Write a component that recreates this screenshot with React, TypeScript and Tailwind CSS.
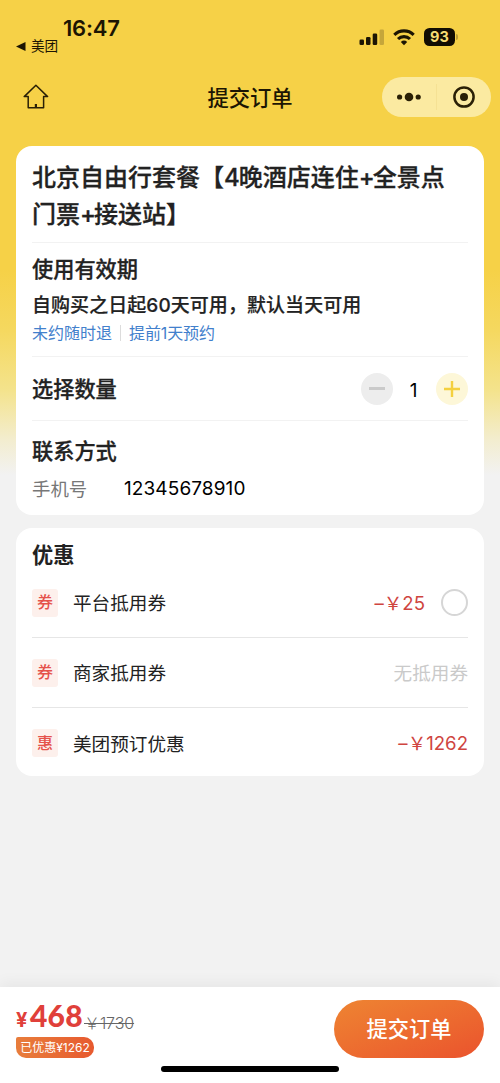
import type { ReactNode } from "react";

function StatusBar() {
  return (
    <div className="flex h-[69px] justify-between">
      <div className="pl-4 pt-[16px]">
        <div className="pl-[47px] text-[22px] font-semibold leading-6 tracking-[-0.2px] text-[#1c1503]">16:47</div>
        <div className="flex h-[13px] items-center gap-[5px] text-[13.6px] leading-[13px] text-[#1c1503]">
          <svg width="10" height="9" viewBox="0 0 10 9"><path d="M9.5 0v9L0 4.5z" fill="#1c1503" /></svg>
          <span>美团</span>
        </div>
      </div>
      <div className="flex h-[18px] items-center pr-[42px] mt-[28px]">
        <svg width="26" height="17" viewBox="0 0 26 17">
          <rect x="0.5" y="10.5" width="4.5" height="5.5" rx="1.3" fill="#1c1503" />
          <rect x="7" y="8" width="4.5" height="8" rx="1.3" fill="#1c1503" />
          <rect x="13.7" y="4.5" width="4.5" height="11.5" rx="1.3" fill="#1c1503" />
          <rect x="20.5" y="0.5" width="4.5" height="15.5" rx="1.3" fill="#c5a63a" />
        </svg>
        <svg className="ml-[8px]" width="22" height="17" viewBox="0 0 22 17" fill="none" stroke="#1c1503" strokeWidth="3.1">
          <path d="M1.3 5.8a14 14 0 0 1 19.4 0" />
          <path d="M5 10a8.7 8.7 0 0 1 12 0" />
          <path d="M11 16.2 7.8 13a4.7 4.7 0 0 1 6.4 0z" fill="#1c1503" stroke="none" />
        </svg>
        <div className="ml-[9px] flex h-[18px] w-[31px] items-center justify-center rounded-[5.5px] bg-[#120d02] text-[14.5px] font-bold leading-[18px] text-[#f7dc73]">93</div>
        <div className="ml-[1px] h-[6px] w-[2px] rounded-r-full bg-[#bd9f38]" />
      </div>
    </div>
  );
}

function NavBar() {
  return (
    <div className="grid h-[56px] grid-cols-[1fr_auto_1fr] items-center text-[#1c1503]">
      <div className="pl-[23px]">
        <svg width="26" height="26" viewBox="0 0 26 26" fill="none" stroke="#2a2006" strokeWidth="1.5" strokeLinejoin="round" strokeLinecap="round">
          <path d="M12.9 1.3 1.2 12.6h4v11.2h15.4V12.6h4z" />
          <path d="M12.9 20v3.8" strokeWidth="2.2" strokeLinecap="butt" />
        </svg>
      </div>
      <div className="pt-[2px] text-[21.3px] font-medium leading-7">提交订单</div>
      <div className="flex justify-end pr-[9px]">
        <div className="flex h-[40px] w-[109px] items-center rounded-full bg-[#fbeaa1]">
          <div className="flex flex-1 justify-center">
            <svg width="26" height="10" viewBox="0 0 26 10" fill="#2a2006">
              <circle cx="3.6" cy="5" r="2.6" /><circle cx="13" cy="5" r="4.3" /><circle cx="22.2" cy="5" r="2.6" />
            </svg>
          </div>
          <div className="h-[26px] w-px bg-[#f5e194]" />
          <div className="flex flex-1 justify-center">
            <svg width="22" height="22" viewBox="0 0 22 22">
              <circle cx="11" cy="11" r="9.6" fill="none" stroke="#2a2006" strokeWidth="2.5" /><circle cx="11" cy="11" r="4" fill="#2a2006" />
            </svg>
          </div>
        </div>
      </div>
    </div>
  );
}

function SectionTitle({ children }: { children: ReactNode }) {
  return <h2 className="text-[21.2px] font-medium leading-[30px] [-webkit-text-stroke:0.3px_#222]">{children}</h2>;
}

function OrderCard() {
  return (
    <section className="mx-4 mt-[21px] h-[369px] rounded-[16px] bg-white px-4 pt-[13px] text-[#222]">
      <h1 className="h-[83px] whitespace-nowrap text-[24px] font-medium leading-[37px] [-webkit-text-stroke:0.3px_#222]">
        北京自由行套餐【<span className="tracking-[-1px]">4</span>晚酒店连住<span className="tracking-[-2px]">+</span>全景点
        <br />
        门票<span className="tracking-[-2px]">+</span>接送站】
      </h1>
      <div className="h-[114px] border-t border-[#f2f2f2] pt-[11px]">
        <SectionTitle>使用有效期</SectionTitle>
        <p className="mt-[8px] text-[19px] font-medium leading-[28px] tracking-[0.06px] [-webkit-text-stroke:0.2px_#222]">自购买之日起60天可用，默认当天可用</p>
        <p className="-mt-[1px] flex items-center text-[16px] leading-[28px] text-[#4280cc]">
          <span>未约随时退</span>
          <span className="mx-[8px] h-4 w-px bg-[#dcdcdc]" />
          <span className="tracking-[-0.1px]">提前1天预约</span>
        </p>
      </div>
      <div className="flex h-[64px] items-center justify-between border-t border-[#f2f2f2]">
        <SectionTitle>选择数量</SectionTitle>
        <div className="flex items-center">
          <button className="flex size-8 items-center justify-center rounded-full bg-[#ededed]">
            <span className="h-[2.5px] w-4 bg-[#cacaca]" />
          </button>
          <span className="w-[43px] pr-[2px] pt-[5px] text-center text-[19px] leading-6 text-black">1</span>
          <button className="flex size-8 items-center justify-center rounded-full bg-[#fdf7d8]">
            <svg width="16" height="16" viewBox="0 0 16 16" stroke="#f4d03f" strokeWidth="2.4"><path d="M0 8h16M8 0v16" /></svg>
          </button>
        </div>
      </div>
      <div className="border-t border-[#f2f2f2] pt-[15px]">
        <SectionTitle>联系方式</SectionTitle>
        <div className="mt-[9px] flex text-[18.4px] leading-[28px]">
          <span className="w-[92px] text-[#777]">手机号</span>
          <span className="text-[19px] tracking-[0.1px] text-black">12345678910</span>
        </div>
      </div>
    </section>
  );
}

function DiscountRow({ tag, label, last, children }: { tag: string; label: string; last?: boolean; children: ReactNode }) {
  return (
    <div className={last ? "flex h-[70px] items-center" : "flex h-[70px] items-center border-b border-[#e6e6e6]"}>
      <span className="flex h-[28px] w-[26px] items-center justify-center rounded-[3px] bg-[#fdf0ec] pb-[1px] text-[16px] font-medium leading-none text-[#e5524b]">{tag}</span>
      <span className="ml-[15px] flex-1 pt-px text-[18.6px] leading-[28px] text-[#222]">{label}</span>
      {children}
    </div>
  );
}

function DiscountCard() {
  return (
    <section className="mx-4 mt-[13px] h-[248px] rounded-[16px] bg-white px-4 pt-[12px]">
      <h2 className="-mb-[2px] h-[30px] text-[21.2px] font-bold leading-[30px] text-[#222]">优惠</h2>
      <DiscountRow tag="券" label="平台抵用券">
        <span className="text-[18.6px] leading-[28px] text-[#cf453f]">–￥25</span>
        <span className="ml-4 size-[27px] rounded-full border-2 border-[#d6d6d6]" />
      </DiscountRow>
      <DiscountRow tag="券" label="商家抵用券">
        <span className="pt-px text-[18.6px] leading-[28px] text-[#cacaca]">无抵用券</span>
      </DiscountRow>
      <DiscountRow tag="惠" label="美团预订优惠" last>
        <span className="text-[18.6px] leading-[28px] text-[#cf453f]">–￥1262</span>
      </DiscountRow>
    </section>
  );
}

function CheckoutBar() {
  return (
    <footer className="mt-auto h-[96px] bg-white shadow-[0_-4px_14px_rgba(0,0,0,0.05)]">
      <div className="flex h-[78px] justify-between px-4 pt-[13px]">
        <div>
          <div className="-mt-[2px] flex h-[39px] items-baseline leading-[34px]">
            <span className="w-[14px] text-[20px] font-bold text-[#e0403a]">¥</span>
            <span className="w-[52px] font-['Lato'] text-[30px] font-black tracking-[0.2px] text-[#e0403a]">468</span>
            <span className="relative top-[2px] ml-[2px] text-[16px] font-light tracking-[-0.1px] text-[#666] line-through">￥1730</span>
          </div>
          <div className="h-[21px] w-[78px] rounded-[10px] rounded-tl-[2px] bg-linear-to-r from-[#e87d3b] to-[#e7592f] text-center text-[12px] leading-[21px] text-white">已优惠¥1262</div>
        </div>
        <button className="h-[58px] w-[150px] rounded-full bg-linear-to-br from-[#ee8432] to-[#ea522d] text-[21.2px] font-medium leading-[58px] text-white">提交订单</button>
      </div>
      <div className="mx-auto mt-[1px] h-[6px] w-[178px] rounded-full bg-black" />
    </footer>
  );
}

export default function App() {
  return (
    <div className="flex h-[1083px] w-[500px] flex-col overflow-hidden bg-[#f2f2f2] bg-[linear-gradient(180deg,#f6d147_0px,#f6d147_270px,#f5d85f_330px,#f4e38c_390px,#f3edcf_440px,#f2f2f2_475px)] font-['Inter','Noto_Sans_CJK_SC',sans-serif]">
      <StatusBar />
      <NavBar />
      <OrderCard />
      <DiscountCard />
      <CheckoutBar />
    </div>
  );
}
